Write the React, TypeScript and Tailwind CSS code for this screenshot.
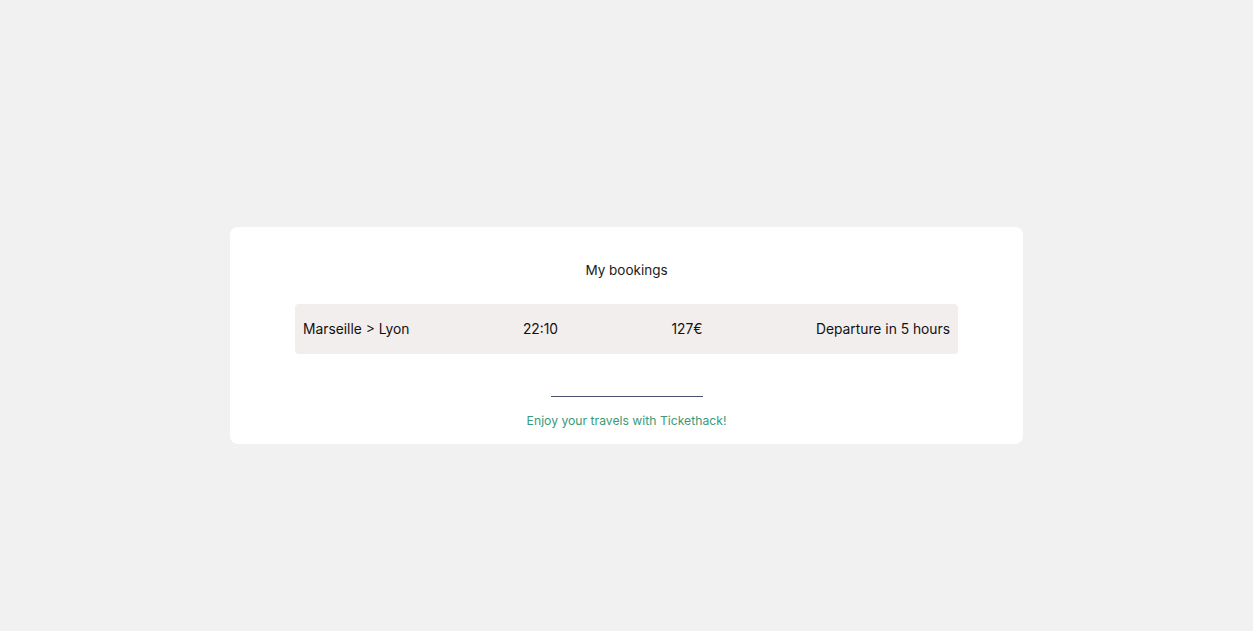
import React from "react";

export default function App() {
  return (
    <div
      className="min-h-screen w-full bg-[#f0f1f0] flex flex-col items-center pt-[227px]"
      style={{ fontFamily: "Inter, 'Open Sans', sans-serif" }}
    >
      <div className="w-[793px] h-[217px] bg-white rounded-[8px] flex flex-col items-center pt-[32px]">
        <h1 className="text-[13.5px] leading-[20px] text-[#1a1a1a] font-normal translate-y-[1px]">My bookings</h1>
        <div className="mt-[25px] w-[663px] h-[50px] bg-[#f3eeee] rounded-[4px] flex items-center justify-between px-[8px] text-[13.8px] text-[#111]">
          <span>Marseille &gt; Lyon</span>
          <span>22:10</span>
          <span>127€</span>
          <span>Departure in 5 hours</span>
        </div>
        <div className="mt-[42px] w-[152px] h-px bg-[#4a5070]" />
        <p className="mt-[15px] text-[12.2px] leading-[18px] text-[#3a9a7a]">Enjoy your travels with Tickethack!</p>
      </div>
    </div>
  );
}
